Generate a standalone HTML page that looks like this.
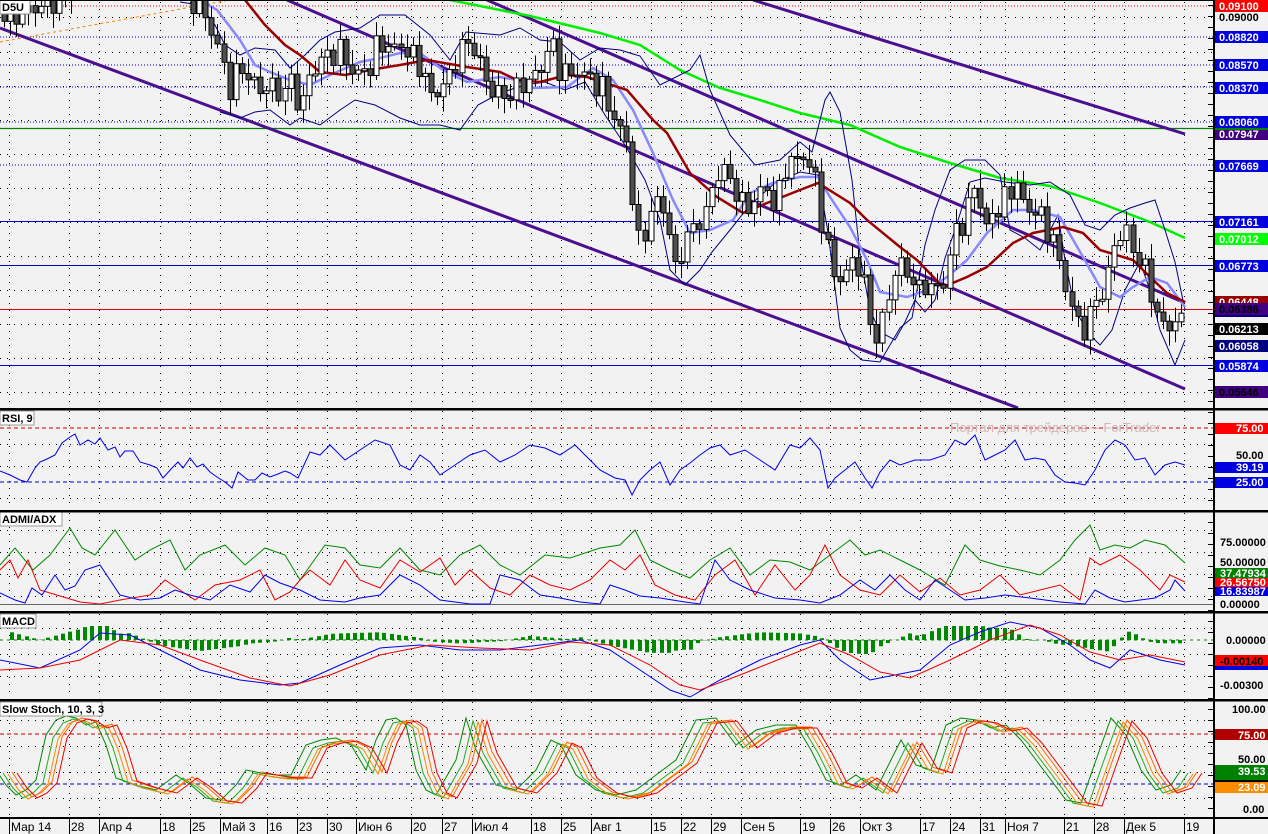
<!DOCTYPE html>
<html><head><meta charset="utf-8"><style>
html,body{margin:0;padding:0;background:#f2f2f2;width:1268px;height:834px;overflow:hidden}
svg{display:block;font-family:"Liberation Sans",sans-serif}
.lb{font-family:"Liberation Sans",sans-serif;font-size:11px;font-weight:bold}
</style></head><body>
<svg id="s" width="1268" height="834" viewBox="0 0 1268 834" xmlns="http://www.w3.org/2000/svg">
<defs>
<clipPath id="cm"><rect x="0" y="1" width="1214" height="407"/></clipPath>
<clipPath id="cr"><rect x="0" y="411" width="1214" height="99"/></clipPath>
<clipPath id="ca"><rect x="0" y="513" width="1214" height="98"/></clipPath>
<clipPath id="cd"><rect x="0" y="614" width="1214" height="85"/></clipPath>
<clipPath id="cs"><rect x="0" y="702" width="1214" height="115"/></clipPath>
</defs>
<rect width="1268" height="834" fill="#f2f2f2"/>
<g id="grid" stroke="#000" stroke-width="1" stroke-dasharray="1,6" fill="none"></g>

<g clip-path="url(#cm)">
<line x1="0" y1="6" x2="1214" y2="6" stroke="#ff0000" stroke-dasharray="1,2"/>
<line x1="0" y1="37" x2="1214" y2="37" stroke="#0000cc" stroke-dasharray="1,2"/>
<line x1="0" y1="65" x2="1214" y2="65" stroke="#0000cc" stroke-dasharray="1,2"/>
<line x1="0" y1="87" x2="1214" y2="87" stroke="#0000cc" stroke-dasharray="1,2"/>
<line x1="0" y1="122" x2="1214" y2="122" stroke="#0000cc" stroke-dasharray="1,2"/>
<line x1="0" y1="128.5" x2="1214" y2="128.5" stroke="#008000" stroke-width="1.3"/>
<line x1="0" y1="165" x2="1214" y2="165" stroke="#0000cc" stroke-dasharray="1,2"/>
<line x1="0" y1="221.5" x2="1214" y2="221.5" stroke="#0000dd"/>
<line x1="0" y1="265.5" x2="1214" y2="265.5" stroke="#0000aa"/>
<line x1="0" y1="309.5" x2="1214" y2="309.5" stroke="#e00000"/>
<line x1="0" y1="365.5" x2="1214" y2="365.5" stroke="#0000dd"/>
<line x1="0" y1="42" x2="230" y2="0" stroke="#ff8000" stroke-dasharray="3,3"/>
<g stroke="#4b0f8f" stroke-width="3" fill="none">
<line x1="0" y1="28" x2="1018" y2="408"/>
<line x1="287" y1="0" x2="1185" y2="389"/>
<line x1="487" y1="0" x2="1185" y2="303"/>
<line x1="753" y1="0" x2="1185" y2="134"/>
</g>
<polyline fill="none" stroke="#00ee00" stroke-width="2.5" points="450,0 500,10 530,16 600,33 640,45 680,70 720,88 760,100 800,113 850,125 900,147 950,163 1000,178 1050,186 1100,203 1150,222 1185,238"/>
<polyline fill="none" stroke="#000080" stroke-width="1" points="180,2 200,5 215,25 225,45 240,55 255,48 275,50 290,68 305,55 320,40 335,32 360,28 380,15 405,15 430,35 450,60 466,32 500,35 520,28 540,40 560,42 580,60 600,48 620,50 640,56 660,85 690,70 700,55 710,90 730,135 755,165 780,160 800,142 812,152 825,100 830,92 840,112 852,180 860,255 870,310 880,332 895,340 905,322 915,300 925,312 935,300 945,258 955,230 970,182 985,178 1005,182 1030,185 1050,182 1070,195 1085,225 1100,230 1115,215 1130,208 1145,203 1155,200 1165,230 1175,262 1185,310"/>
<polyline fill="none" stroke="#000080" stroke-width="1" points="220,112 240,118 255,112 270,110 290,125 300,118 320,125 340,110 355,100 375,105 400,118 420,125 440,125 460,130 478,105 500,93 525,85 545,82 565,90 585,82 605,115 625,145 645,180 660,220 670,270 685,285 700,270 712,252 730,230 750,205 775,183 800,172 818,175 828,232 840,328 850,350 862,360 880,362 900,328 912,318 925,245 935,210 950,170 965,160 985,160 1000,175 1010,230 1025,238 1040,250 1058,215 1065,260 1075,310 1090,335 1100,345 1112,330 1125,290 1140,262 1150,290 1160,330 1175,365 1185,340"/>
<polyline fill="none" stroke="#8888ff" stroke-width="2.5" points="200,0 217,10 240,40 255,65 270,72 290,80 310,85 330,75 360,62 380,58 400,53 420,53 443,70 467,82 500,77 517,80 533,88 567,87 593,68 613,80 633,110 653,153 673,200 690,233 710,230 733,220 750,193 773,183 800,177 818,177 830,197 850,227 867,260 880,292 907,297 927,290 947,277 967,260 987,233 1013,210 1033,210 1060,217 1083,257 1100,287 1120,297 1133,287 1150,277 1167,283 1185,307"/>
<polyline fill="none" stroke="#990000" stroke-width="2.5" points="245,0 265,25 285,45 300,55 320,72 345,75 370,70 400,65 427,60 467,67 500,72 517,80 540,82 567,75 587,77 627,90 653,120 667,133 690,173 717,197 743,213 767,203 800,190 818,183 850,203 867,220 900,247 917,260 943,287 967,277 987,267 1013,243 1033,233 1063,227 1083,233 1100,250 1133,260 1150,277 1167,293 1185,302"/>
<g id="candles"></g>
</g>
<rect x="0" y="0" width="30" height="14" fill="#fff" stroke="#888"/>
<text x="2" y="11" class="lb" fill="#000">D5U</text>

<g clip-path="url(#cr)">
<line x1="0" y1="428" x2="1214" y2="428" stroke="#cc0000" stroke-dasharray="4,3"/>
<line x1="0" y1="482" x2="1214" y2="482" stroke="#0000cc" stroke-dasharray="4,3"/>
<text x="950" y="432" font-size="13" fill="#d4b4b4">Портал для трейдеров -- ForTrader</text>
<polyline fill="none" stroke="#0000ee" points="0,471 10,475 20,480 27,482 35,468 40,462 47,459 55,455 62,443 70,437 75,434 80,445 88,440 95,444 100,438 108,450 115,447 120,457 125,451 133,451 140,462 150,465 157,468 163,478 172,468 178,462 183,468 190,458 197,467 203,464 210,472 217,477 225,482 232,488 238,472 248,480 255,480 262,473 270,477 278,474 285,471 290,473 298,478 310,452 320,455 330,445 345,460 360,450 375,440 390,445 400,465 410,470 420,455 430,462 440,475 455,465 470,455 485,450 500,462 515,455 530,445 545,448 560,455 575,445 590,460 600,470 615,478 625,480 632,495 640,480 650,470 660,462 670,485 680,470 690,463 700,455 710,448 720,445 730,455 745,450 760,460 775,470 790,445 800,448 810,438 820,450 828,488 835,478 845,470 855,462 865,478 872,488 880,472 890,460 900,465 915,460 930,460 945,455 955,440 965,445 975,435 985,460 995,455 1005,450 1015,440 1025,460 1035,458 1045,460 1055,475 1065,482 1075,483 1085,485 1095,470 1105,450 1115,440 1125,445 1135,460 1145,458 1155,475 1165,465 1175,462 1185,465"/>
</g>
<rect x="0" y="411" width="34" height="14" fill="#fff" stroke="#999"/>
<text x="2" y="422" class="lb">RSI, 9</text>

<g clip-path="url(#ca)">
<line x1="0" y1="604.5" x2="1214" y2="604.5" stroke="#666"/>
<polyline fill="none" stroke="#008800" points="0,565 15,548 33,570 50,555 70,528 82,548 95,555 115,530 135,560 150,550 170,540 185,570 200,555 225,545 245,565 265,548 285,555 300,580 325,545 345,548 360,565 380,568 400,548 420,570 440,575 460,555 480,545 500,565 520,575 545,555 570,558 600,548 620,545 635,530 650,560 670,570 690,578 710,560 730,548 750,575 770,560 790,562 810,570 830,555 850,540 865,555 880,550 900,560 920,570 945,585 965,545 980,560 1000,566 1020,570 1040,575 1060,560 1075,540 1090,525 1100,550 1115,545 1130,548 1145,540 1165,545 1185,563"/>
<polyline fill="none" stroke="#ee0000" points="0,570 10,560 18,578 28,560 40,590 60,596 80,602 100,604 120,600 150,595 165,580 180,590 195,600 215,585 240,580 260,570 275,600 290,592 300,580 310,570 330,585 345,560 360,580 380,588 400,560 420,572 440,558 455,585 470,570 490,588 510,595 530,575 550,585 570,590 590,580 610,560 625,570 640,555 655,585 675,595 695,600 715,575 735,560 755,595 775,565 795,590 810,575 825,545 840,575 860,590 880,595 900,575 920,592 940,578 960,595 980,590 1000,575 1020,595 1040,590 1060,585 1080,600 1090,558 1100,565 1120,555 1140,570 1160,590 1170,575 1185,582"/>
<polyline fill="none" stroke="#0000ee" points="0,593 15,600 25,603 32,588 42,595 55,575 65,590 75,586 85,570 100,565 120,595 140,600 160,598 175,590 190,595 210,600 230,585 250,592 265,575 280,583 300,590 320,600 345,602 360,598 380,595 400,575 420,585 440,600 470,604 490,604 500,575 520,580 540,595 560,598 580,602 600,604 610,585 625,590 640,596 660,598 685,602 700,604 715,560 730,580 750,590 775,598 800,600 820,603 840,595 860,580 875,590 890,575 905,590 920,600 935,580 950,590 965,600 985,598 1005,595 1030,598 1060,602 1085,604 1095,590 1110,598 1125,602 1140,600 1155,598 1170,590 1175,580 1185,591"/>
</g>
<rect x="0" y="512" width="62" height="14" fill="#fff" stroke="#999"/>
<text x="2" y="523" class="lb">ADMI/ADX</text>

<g clip-path="url(#cd)">
<line x1="0" y1="640" x2="1214" y2="640" stroke="#008800" stroke-dasharray="3,4"/>
<g id="hist" fill="#008800"></g>
<polyline id="mb" fill="none" stroke="#0000ee" points="0,660 40,668 80,650 100,633 130,635 160,650 200,670 240,680 280,685 300,683 340,665 380,648 420,645 460,650 500,650 540,645 580,640 610,650 640,670 670,690 690,697 720,680 760,660 800,645 820,640 840,660 870,680 890,676 920,670 950,645 980,632 1010,622 1040,628 1070,645 1090,660 1110,668 1130,650 1160,660 1185,665"/>
<polyline id="mr" fill="none" stroke="#ee0000" points="0,670 40,668 80,660 120,640 160,645 200,660 250,678 290,686 330,675 380,655 430,645 480,648 530,650 570,642 610,645 650,665 680,685 700,690 740,675 790,655 820,643 850,655 880,672 910,678 950,660 990,640 1030,625 1060,635 1090,652 1120,660 1150,655 1185,662"/>
</g>
<rect x="0" y="614" width="36" height="14" fill="#fff" stroke="#999"/>
<text x="2" y="625" class="lb">MACD</text>

<g clip-path="url(#cs)">
<line x1="0" y1="734" x2="1214" y2="734" stroke="#cc0000" stroke-dasharray="4,3"/>
<line x1="0" y1="784" x2="1214" y2="784" stroke="#0000cc" stroke-dasharray="4,3"/>
<defs><polyline id="st" fill="none" points="0,770 10,785 20,795 30,790 40,780 50,735 60,720 70,716 80,718 90,725 100,722 110,745 120,778 140,785 160,790 180,775 195,785 210,798 225,800 240,785 250,770 265,773 280,775 295,775 310,745 325,740 340,738 355,745 370,770 380,740 390,720 400,718 410,725 420,770 430,790 440,795 460,760 470,718 480,750 500,785 520,790 540,770 555,740 565,745 580,775 600,790 620,795 640,790 660,775 680,760 690,740 700,720 720,718 740,745 760,730 780,725 800,725 815,750 830,780 845,785 860,775 880,790 895,760 905,740 920,765 935,770 950,725 965,718 980,720 995,728 1010,725 1025,740 1040,760 1055,780 1070,800 1085,803 1100,760 1115,718 1130,735 1145,770 1160,790 1175,785 1185,770"/></defs>
<use href="#st" stroke="#008800" transform="translate(-4,0)"/>
<use href="#st" stroke="#22aa22" transform="translate(3,3)"/>
<use href="#st" stroke="#ff8800" transform="translate(8,4)"/>
<use href="#st" stroke="#ff6600" transform="translate(12,2)"/>
<use href="#st" stroke="#ee0000" transform="translate(17,3)"/>
</g>
<rect x="0" y="702" width="102" height="14" fill="#fff" stroke="#999"/>
<text x="2" y="713" class="lb">Slow Stoch, 10, 3, 3</text>

<g fill="#000">
<rect x="0" y="0" width="1268" height="1"/>
<rect x="0" y="408" width="1268" height="2.5"/>
<rect x="0" y="510" width="1268" height="2.5"/>
<rect x="0" y="611" width="1268" height="2.5"/>
<rect x="0" y="699" width="1268" height="2.5"/>
<rect x="0" y="817" width="1268" height="2"/>
<rect x="1213" y="0" width="2" height="834"/>
</g>
<g id="ticks" stroke="#000"></g>

<g class="lb">
<rect x="1215" y="0" width="53" height="12" fill="#ff0000"/><text x="1219" y="10" fill="#fff">0.09100</text>
<text x="1219" y="21" fill="#000">0.09000</text>
<rect x="1215" y="31" width="53" height="12" fill="#0000e0"/><text x="1219" y="41" fill="#fff">0.08820</text>
<rect x="1215" y="59" width="53" height="12" fill="#0000e0"/><text x="1219" y="69" fill="#fff">0.08570</text>
<rect x="1215" y="82" width="53" height="12" fill="#0000e0"/><text x="1219" y="92" fill="#fff">0.08370</text>
<rect x="1215" y="128" width="53" height="12" fill="#400080"/><text x="1219" y="138" fill="#fff">0.07947</text>
<rect x="1215" y="124" width="53" height="6" fill="#008000"/>
<rect x="1215" y="116" width="53" height="12" fill="#0000e0"/><text x="1219" y="126" fill="#fff">0.08060</text>
<rect x="1215" y="160" width="53" height="12" fill="#0000e0"/><text x="1219" y="170" fill="#fff">0.07669</text>
<rect x="1215" y="216" width="53" height="12" fill="#0000e0"/><text x="1219" y="226" fill="#fff">0.07161</text>
<rect x="1215" y="233" width="53" height="12" fill="#00ff00"/><text x="1219" y="243" fill="#fff">0.07012</text>
<rect x="1215" y="260" width="53" height="12" fill="#0000e0"/><text x="1219" y="270" fill="#fff">0.06773</text>
<rect x="1215" y="296" width="53" height="12" fill="#990000"/><text x="1219" y="306" fill="#fff">0.06448</text>
<rect x="1215" y="313" width="53" height="4" fill="#000080"/>
<rect x="1215" y="303" width="53" height="12" fill="#400080"/><text x="1219" y="313" fill="#000">0.06386</text>
<rect x="1215" y="323" width="53" height="12" fill="#000"/><text x="1219" y="333" fill="#fff">0.06213</text>
<rect x="1215" y="340" width="53" height="12" fill="#000080"/><text x="1219" y="350" fill="#fff">0.06058</text>
<rect x="1215" y="360" width="53" height="12" fill="#0000e0"/><text x="1219" y="370" fill="#fff">0.05874</text>
<rect x="1215" y="386" width="53" height="12" fill="#400080"/><text x="1219" y="396" fill="#000">0.05646</text>

<rect x="1215" y="423" width="53" height="11" fill="#ff0000"/><text x="1236" y="432" fill="#fff">75.00</text>
<text x="1236" y="459" fill="#000">50.00</text>
<rect x="1215" y="462" width="53" height="11" fill="#0000e0"/><text x="1236" y="471" fill="#fff">39.19</text>
<rect x="1215" y="477" width="53" height="11" fill="#0000e0"/><text x="1236" y="486" fill="#fff">25.00</text>

<text x="1220" y="546" fill="#000">75.00000</text>
<text x="1220" y="566" fill="#000">50.00000</text>
<rect x="1215" y="568" width="53" height="10" fill="#008000"/><text x="1220" y="577" fill="#fff">37.47934</text>
<rect x="1215" y="578" width="53" height="9" fill="#ff0000"/><text x="1220" y="586" fill="#fff">26.56750</text>
<rect x="1215" y="587" width="53" height="9" fill="#0000e0"/><text x="1220" y="595" fill="#fff">16.83987</text>
<text x="1220" y="608" fill="#000">0.00000</text>

<text x="1226" y="644" fill="#000">0.00000</text>
<rect x="1215" y="664" width="53" height="6" fill="#0000e0"/>
<rect x="1215" y="655" width="53" height="11" fill="#ff0000"/><text x="1220" y="665" fill="#000">-0.00140</text>
<text x="1220" y="689" fill="#000">-0.00300</text>

<text x="1232" y="713" fill="#000">100.00</text>
<rect x="1215" y="729" width="53" height="11" fill="#b00000"/><text x="1238" y="739" fill="#fff">75.00</text>
<text x="1238" y="763" fill="#000">50.00</text>
<rect x="1215" y="765" width="53" height="15" fill="#008000"/><text x="1238" y="775" fill="#fff">39.53</text>
<rect x="1215" y="780" width="53" height="3" fill="#000"/>
<rect x="1215" y="782" width="53" height="11" fill="#ff8c00"/><text x="1238" y="791" fill="#fff">23.09</text>
<text x="1243" y="813" fill="#000">0.00</text>
</g>

<g font-size="12" fill="#000" id="dates">
<text x="11" y="831">Мар 14</text><text x="71" y="831">28</text><text x="101" y="831">Апр 4</text>
<text x="162" y="831">18</text><text x="192" y="831">25</text><text x="222" y="831">Май 3</text>
<text x="269" y="831">16</text><text x="299" y="831">23</text><text x="329" y="831">30</text>
<text x="358" y="831">Июн 6</text><text x="413" y="831">20</text><text x="444" y="831">27</text>
<text x="474" y="831">Июл 4</text><text x="533" y="831">18</text><text x="563" y="831">25</text>
<text x="593" y="831">Авг 1</text><text x="653" y="831">15</text><text x="683" y="831">22</text>
<text x="713" y="831">29</text><text x="743" y="831">Сен 5</text><text x="802" y="831">19</text>
<text x="832" y="831">26</text><text x="862" y="831">Окт 3</text><text x="922" y="831">17</text>
<text x="952" y="831">24</text><text x="982" y="831">31</text><text x="1007" y="831">Ноя 7</text>
<text x="1066" y="831">21</text><text x="1096" y="831">28</text><text x="1126" y="831">Дек 5</text>
<text x="1186" y="831">19</text>
</g>
</svg>
<script>
(function(){
var NS="http://www.w3.org/2000/svg";
function el(t,a,p){var e=document.createElementNS(NS,t);for(var k in a)e.setAttribute(k,a[k]);p.appendChild(e);return e;}
var dx=[9,69,99,160,190,220,267,297,327,356,411,442,472,531,561,591,651,681,711,741,800,830,860,920,950,980,1005,1064,1094,1124,1184];
var g=document.getElementById('grid'),tk=document.getElementById('ticks');
var panels=[[2,407],[411,509],[513,610],[614,698],[702,816]];
dx.forEach(function(x){
 panels.forEach(function(p){el('line',{x1:x+.5,y1:p[0],x2:x+.5,y2:p[1]},g);});
 el('line',{x1:x+.5,y1:819,x2:x+.5,y2:834},tk);
});
[17,52,86,120,154,188,222,256,290,324,358,392,444,466,498,530,552,574,596,628,654,676,720,746,772,798].forEach(function(y){el('line',{x1:0,y1:y+.5,x2:1212,y2:y+.5},g);});
for(var y=5;y<818;y+=11){el('line',{x1:1208,y1:y+.5,x2:1213,y2:y+.5},tk);}
var P=[[0,12],[20,15],[40,5],[60,2],[70,-10],[185,-10],[195,2],[205,15],[215,40],[222,60],[230,90],[240,65],[250,80],[260,90],[270,85],[280,95],[290,80],[300,110],[310,75],[320,60],[330,55],[340,50],[350,70],[360,75],[370,65],[380,40],[390,50],[400,45],[410,55],[420,65],[430,95],[440,90],[450,75],[460,50],[470,40],[480,65],[490,90],[500,95],[510,95],[520,85],[530,80],[540,70],[550,40],[560,70],[570,75],[580,70],[590,80],[600,85],[610,110],[620,130],[630,150],[635,250],[645,230],[655,200],[665,210],[675,270],[685,240],[695,225],[705,215],[715,175],[725,170],[735,190],[745,210],[755,200],[765,185],[775,210],[785,165],[795,160],[805,155],[815,180],[825,240],[835,280],[845,275],[855,255],[865,290],[875,345],[885,310],[895,270],[905,265],[915,290],[925,285],[935,290],[945,280],[955,230],[965,220],[975,180],[985,230],[995,210],[1005,200],[1015,180],[1025,210],[1035,210],[1045,225],[1055,245],[1065,285],[1075,320],[1085,330],[1095,300],[1105,290],[1115,240],[1125,230],[1135,255],[1145,270],[1155,310],[1165,330],[1175,320],[1185,325]];
function ip(A,x){for(var i=1;i<A.length;i++){if(x<=A[i][0]){var a=A[i-1],b=A[i];var t=(x-a[0])/((b[0]-a[0])||1);return a[1]+t*(b[1]-a[1]);}}return A[A.length-1][1];}
var cg=document.getElementById('candles');
var prev=ip(P,0);
for(var x=4;x<=1186;x+=6.1){
 if(x>72&&x<188){prev=-20;continue;}
 var c=ip(P,x)+Math.sin(x*1.7)*9+Math.sin(x*0.53)*5;
 var o=prev; prev=c;
 var top=Math.min(o,c),bot=Math.max(o,c);if(bot-top<2){bot=top+2;}
 var w1=top-3-Math.abs(Math.sin(x*2.3))*12,w2=bot+3+Math.abs(Math.cos(x*1.9))*12;
 var xc=Math.round(x)+.5;
 el('line',{x1:xc,y1:w1,x2:xc,y2:w2,stroke:'#000'},cg);
 el('rect',{x:xc-2.5,y:top,width:5,height:bot-top,fill:(c<o?'#ffffff':'#505050'),stroke:'#000'},cg);
}
function pts(id){return document.getElementById(id).getAttribute('points').trim().split(/\s+/).map(function(s){return s.split(',').map(Number);});}
var B=pts('mb'),R=pts('mr'),h=document.getElementById('hist');
for(var x=12;x<=1186;x+=7.3){
 var d=(ip(R,x)-ip(B,x))*1.1;if(d>14)d=14;if(d<-14)d=-14;var xx=Math.round(x)-2;
 if(d>0)el('rect',{x:xx,y:640-d,width:4,height:d},h);else el('rect',{x:xx,y:640,width:4,height:-d},h);
}
})();
</script>
</body></html>
